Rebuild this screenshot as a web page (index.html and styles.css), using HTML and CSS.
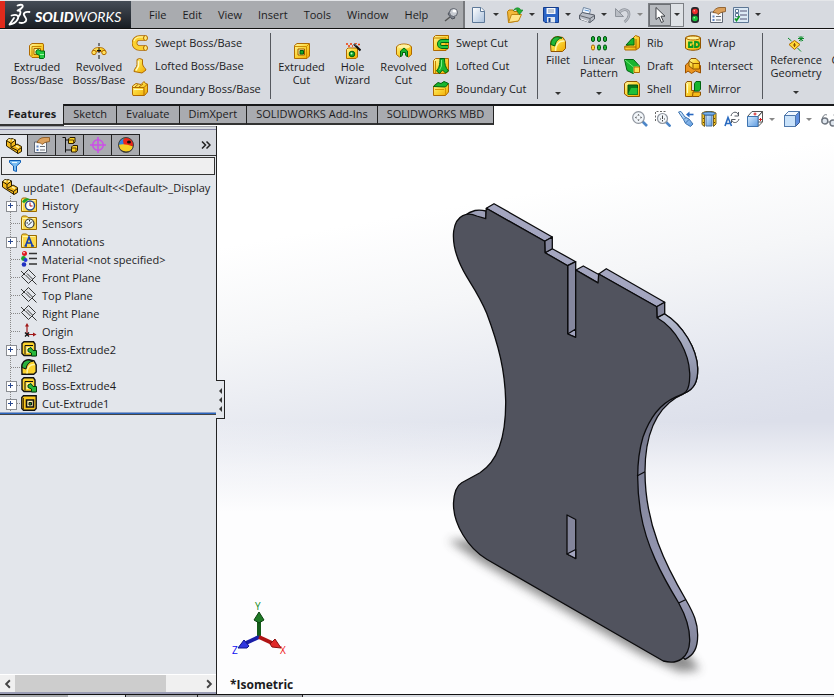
FILE: index.html
```html
<!DOCTYPE html>
<html lang="en">
<head>
<meta charset="utf-8">
<title>SOLIDWORKS - update1</title>
<link rel="stylesheet" href="styles.css">
</head>
<body>
<svg class="defs" aria-hidden="true">
  <defs>
    <linearGradient id="gold" x1="0" y1="0" x2="1" y2="1"><stop offset="0" stop-color="#fff6a0"/><stop offset=".45" stop-color="#fbd83a"/><stop offset="1" stop-color="#f0a800"/></linearGradient>
    <linearGradient id="steel" x1="0" y1="0" x2="1" y2="1"><stop offset="0" stop-color="#fff"/><stop offset="1" stop-color="#a9c0dc"/></linearGradient>
    <linearGradient id="blue" x1="0" y1="0" x2="1" y2="1"><stop offset="0" stop-color="#d6ecff"/><stop offset="1" stop-color="#5e9be0"/></linearGradient>
  </defs>
  <symbol id="i-boss" viewBox="0 0 16 16"><path d="M.5 2.500 3 .5h11l.5 1.500V12l-2.500 2.500H3L.5 12z" fill="url(#gold)" stroke="#b06a00"/><path d="M3 3.500h9.500M3 3.500v9.500" stroke="#c88400" fill="none"/><path d="M5 5.500h6.500v6H5z" fill="#fff3a0" stroke="#a86400"/><path d="M7 8l2-1.500 3 1.500h3.500v6.500L14.500 15.500H10.500v-3L7 10.500z" fill="#22c840" stroke="#006b12"/><path d="M11 11.500h4" stroke="#9cf5a0"/></symbol>
  <symbol id="i-revolve" viewBox="0 0 16 16"><path d="M1.500 9C1.500 6 4 4.500 8 4.500S14.500 6 14.500 9l-3 .5c-1-1.500-6-1.500-7 0z" fill="url(#gold)" stroke="#b06a00"/><circle cx="3" cy="9.500" r="2.200" fill="#ffe05a" stroke="#b06a00"/><circle cx="13" cy="9.500" r="2.200" fill="#ffe05a" stroke="#b06a00"/><path d="M8 0v3M8 5v5M8 12v4M6 7.500h4" stroke="#111"/></symbol>
  <symbol id="i-sweep" viewBox="0 0 16 16"><path d="M13 3H7.500a5 5 0 0 0 0 10H13" fill="none" stroke="#b06a00" stroke-width="5.600"/><path d="M13 3H7.500a5 5 0 0 0 0 10H13" fill="none" stroke="#fbd030" stroke-width="4"/><path d="M12 2H7.500a6 6 0 0 0-5.500 4" fill="none" stroke="#fff8a8" stroke-width="1.200"/><ellipse cx="13.500" cy="3" rx="2" ry="2.500" fill="#ffe870" stroke="#b06a00"/><ellipse cx="13.500" cy="13" rx="2" ry="2.500" fill="#ffe870" stroke="#b06a00"/></symbol>
  <symbol id="i-loft" viewBox="0 0 16 16"><path d="M5 1.500 7.500.5l3 1V6c.5 3 3 4 3.500 6l-4 3-8-1.500c0-3 3-4 3-7z" fill="url(#gold)" stroke="#b06a00"/><path d="M6.500 3v5L4 12.500" stroke="#fffbc8" fill="none" stroke-width="1.500"/></symbol>
  <symbol id="i-boundary" viewBox="0 0 16 16"><path d="M.5 5 4 2.500l5 1L12 .5l1.500 2 2 .5v8l-3 3.500H1L.5 13z" fill="url(#gold)" stroke="#b06a00"/><path d="M.5 6.500h11.500V14M12 6.500 15.500 3M3 6l3-2.500M7 6l4-3" fill="none" stroke="#b06a00"/><path d="M2 8.500h9" stroke="#fffbc0"/></symbol>
  <symbol id="i-cut" viewBox="0 0 16 16"><path d="M.5 2.500 3 .5h12.500V13L13 15.500H.5z" fill="url(#gold)" stroke="#b06a00"/><path d="M.5 3.500h12V15M12.500 3.500 15 1" fill="none" stroke="#d08c00"/><path d="M4 6h6.500v6H4z" fill="#fff2a0" stroke="#a05c00"/><path d="M6 7.500h3.500v3.500H6z" fill="#15a52a" stroke="#005b10"/></symbol>
  <symbol id="i-hole" viewBox="0 0 16 16"><path d="M1.500 6.500 3 5h9.500v9L11 15.500H1.500z" fill="url(#gold)" stroke="#b06a00"/><circle cx="7" cy="11" r="2.800" fill="#11a52a" stroke="#005b10"/><circle cx="6.500" cy="10.500" r="1" fill="#c8ffc8"/><path d="m9 1 6.500 6.500" stroke="#111" stroke-width="2.200"/><path d="M1 1h2M5 1h2M3 3h2M7 3h1M10 0h2M13 1.500h2" stroke="#f03800" stroke-width="1.600"/><path d="m10 1.500 1 1" stroke="#fff"/></symbol>
  <symbol id="i-revcut" viewBox="0 0 16 16"><path d="M.5 4C2 0 14 0 15.500 4v7.500L12.500 14l-2-1-1-4h-3l-1 4-2 1-3-2.500z" fill="url(#gold)" stroke="#b06a00"/><ellipse cx="8" cy="3.500" rx="6" ry="2" fill="#fff2a0"/><path d="M4.500 14V8L8 5l3.500 3v6L9.500 12V9.500h-3V12z" fill="#18b52e" stroke="#006410"/></symbol>
  <symbol id="i-sweptcut" viewBox="0 0 16 16"><path d="M.5 2.500 2.500.5h13V13L13 15.500H.5z" fill="url(#gold)" stroke="#b06a00"/><path d="M.5 3h12.500v12" fill="none" stroke="#c88400"/><path d="M16 6H9a3 3 0 0 0 0 6h6" fill="none" stroke="#006410" stroke-width="4"/><path d="M16 6H9a3 3 0 0 0 0 6h6" fill="none" stroke="#25c83c" stroke-width="2.200"/></symbol>
  <symbol id="i-loftcut" viewBox="0 0 16 16"><path d="M.5 2.500 2.500.5h13V13L13 15.500H.5z" fill="url(#gold)" stroke="#b06a00"/><path d="M2.500 3v12" stroke="#c88400"/><path d="M7 .5h4.500c0 6 1 9 4 12.500l-3 2-3-3-3 3.500L3.500 13C6 10 7 7 7 .5z" fill="#18b52e" stroke="#006410"/><path d="M8.500 2v6l-2 4" stroke="#78ef80" fill="none"/></symbol>
  <symbol id="i-boundcut" viewBox="0 0 16 16"><path d="M.5 5 3 3h12.500v8l-3 3.500H.5z" fill="url(#gold)" stroke="#b06a00"/><path d="M.5 5.500 5 1.500l3 1 3-2 4.500 2-3 3.500z" fill="#18b52e" stroke="#006410"/><path d="M12.500 7v7M2 8.500h9" stroke="#d69400"/></symbol>
  <symbol id="i-fillet" viewBox="0 0 16 16"><path d="M.5 8C.5 3 4 .5 8 .5l5 1 2.500 4v7L12.500 15.500H1z" fill="url(#gold)" stroke="#905400"/><path d="M.8 8.500C1 3.500 4 .8 8 .8l4 1.200c-4 .5-6.500 3.500-7 8z" fill="#22b838" stroke="#006410"/><path d="M5.500 15C5.500 8 9 4.500 14.500 5" fill="none" stroke="#fff8b0" stroke-width="1.500"/></symbol>
  <symbol id="i-pattern" viewBox="0 0 16 16"><g fill="#20b838" stroke="#005010"><rect x=".5" y=".5" width="3" height="5" rx="1.500"/><rect x="6.500" y=".5" width="3" height="5" rx="1.500"/><rect x="12.500" y=".5" width="3" height="5" rx="1.500"/><rect x="6.500" y="9" width="3" height="5" rx="1.500"/><rect x="12.500" y="9" width="3" height="5" rx="1.500"/></g><rect x=".5" y="9" width="3" height="5" rx="1.500" fill="#ffd640" stroke="#a86400"/></symbol>
  <symbol id="i-rib" viewBox="0 0 16 16"><path d="M8 4 11.500.5l4 1.500v10.500L12 15H1l-.5-3.500L8 9z" fill="url(#gold)" stroke="#b06a00"/><path d="M12 4v10.500M1 12h11" stroke="#a86400"/><path d="m2 10 6-6.500h2V10z" fill="#18b52e" stroke="#006410"/></symbol>
  <symbol id="i-draft" viewBox="0 0 16 16"><path d="M.5 1.500h9L15.500 8v3L9 15.500 3 12.500z" fill="#18b52e" stroke="#006410"/><path d="m1 2 8.500 7 6-1M9.500 9v6" stroke="#70e878" fill="none"/><path d="M10 9h5.500v5.500H10z" fill="#ffe256" stroke="#b06a00"/></symbol>
  <symbol id="i-shell" viewBox="0 0 16 16"><path d="M.5 2.500 3 .5h10l2.500 2.500v12.500H4L.5 13z" fill="url(#gold)" stroke="#905400"/><path d="M4 4h9.500v9.500H4z" fill="#087818" stroke="#005010"/><path d="M7 7h6.500v6.500H4z" fill="#20c038"/></symbol>
  <symbol id="i-wrap" viewBox="0 0 16 16"><path d="M.5 3C1 0 15 0 15.500 3v10c-1 3-14 3-15 0z" fill="url(#gold)" stroke="#905400"/><ellipse cx="8" cy="3" rx="7" ry="2" fill="#fff3a0" stroke="#b06a00"/><path d="M7.500 7.500H4v4.500h3.500V9.500M10 7v5h1.500a2.500 2.500 0 0 0 0-5z" fill="none" stroke="#0b9a22" stroke-width="1.800"/></symbol>
  <symbol id="i-intersect" viewBox="0 0 16 16"><path d="M.5 7 4 4l4 1 7.500 2.500V15l-5-2-4 2.500L3 13l-2.500 2z" fill="#eb9520" stroke="#9a5000"/><path d="m4 3 2-2.500h5L14.500 4v7H8L4 8z" fill="url(#gold)" stroke="#905400"/><path d="M8 5.500h6M8 5.500v5M4 3l4 2.500" stroke="#905400"/></symbol>
  <symbol id="i-mirror" viewBox="0 0 16 16"><path d="M.5 2.500 2 .5h4.500v9H9V14l-1.500 1.500H.5z" fill="url(#gold)" stroke="#905400"/><path d="M8 11h7.500v3L14 15.500H7.500z" fill="#f6ba18" stroke="#905400"/><path d="M9.500 2.500 11 .5h4.500v8L13.500 10h-4z" fill="#18b52e" stroke="#006410"/><path d="M2.500 3v9" stroke="#fffbc0"/></symbol>
  <symbol id="i-refgeo" viewBox="0 0 16 16"><path d="m1 8.500 5.500-4L12 8.500l-5.500 5z" fill="#ffd936" stroke="#b06a00"/><path d="M6.500 7v4M5 9h3" stroke="#8a5000"/><path d="m0 2 3.500 3M9.500 12l3.500 3.500M10 2.500h6M13 0v5.500M11 .5l4 4.500M15 .5l-4 4.500" stroke="#0a8a28" fill="none"/></symbol>
  <symbol id="i-pin" viewBox="0 0 16 16"><path d="m1 14 5-4" stroke="#555" stroke-width="1.500"/><path d="m4 7 4 5 3-1-5-7z" fill="#808590" stroke="#4e535c"/><circle cx="9.500" cy="5.500" r="4" fill="#c7cbd2" stroke="#5b606a"/><ellipse cx="10.500" cy="4" rx="2" ry="1.500" fill="#fff"/></symbol>
  <symbol id="i-new" viewBox="0 0 16 16"><path d="M1.500.5H10L13.500 4v11.500h-12z" fill="url(#steel)" stroke="#5d7898"/><path d="M9.500.5v4h4" fill="#fff" stroke="#5d7898"/></symbol>
  <symbol id="i-open" viewBox="0 0 16 16"><path d="M.5 4.500 2 3h4l1 1.500h4V14L1.500 15.500z" fill="#f2b93a" stroke="#b47808"/><path d="m1.500 15.500 3-8h10l-3 6.500z" fill="#ffe58a" stroke="#c08410"/><path d="M6.500 3.500C8 0 13 0 13.500 3H16l-3.500 4.500L9.500 3h1.800C10 1.800 8 2 6.500 3.500z" fill="#25b437" stroke="#0b7c1e" stroke-width=".6"/></symbol>
  <symbol id="i-save" viewBox="0 0 16 16"><path d="M.5.5h15v15H2L.5 14z" fill="#2c66c8" stroke="#143c8c"/><path d="M3.500 1h9v6h-9z" fill="#f7f9fc"/><path d="M5 3h6M5 5h6" stroke="#8899b0"/><path d="M4 10h8v5.500H4z" fill="#dfe6ef"/><path d="M5.500 11h2v4h-2z" fill="#16408f"/></symbol>
  <symbol id="i-print" viewBox="0 0 16 16"><path d="M3 6 4.500.5l7 2L10.500 7z" fill="#f2f8ff" stroke="#6d84a0"/><path d="m.5 8 3-2.500L15.500 8v4L11 15.500.5 12z" fill="#b9bec7" stroke="#555b66"/><path d="m.5 8.500 10.500 3 4.500-3M11 11.500v4" stroke="#62676f" fill="none"/><path d="m2 12 7 2.500" stroke="#fff"/><path d="M5.500 3 10 4" stroke="#5b9be0"/></symbol>
  <symbol id="i-undo" viewBox="0 0 16 16"><path d="M3.500 6.500C8 .5 14.500 2 14 8c-.2 3-2 5-4.500 7" fill="none" stroke="#8f949c" stroke-width="2.600"/><path d="M3.500 6.500C8 .5 14.500 2 14 8c-.2 3-2 5-4.500 7" fill="none" stroke="#b9bdc4" stroke-width="1.200"/><path d="M.5 1.500v8h8z" fill="#b9bdc4" stroke="#8f949c"/></symbol>
  <symbol id="i-arrow" viewBox="0 0 16 16"><path d="M4 .5v12l3-2.500 2.500 5.500 2-1L9 9.200h4z" fill="#fff" stroke="#3c3f44"/></symbol>
  <symbol id="i-light" viewBox="0 0 16 16"><rect x="4" y="0" width="8" height="16" rx="3" fill="#26282b"/><circle cx="8" cy="4.500" r="2.800" fill="#ef2b2b"/><circle cx="8" cy="11.500" r="2.800" fill="#17c23c"/><circle cx="7.300" cy="3.800" r=".8" fill="#ffb0a8"/><circle cx="7.300" cy="10.800" r=".8" fill="#b2ffb8"/></symbol>
  <symbol id="i-props" viewBox="0 0 16 16"><path d="M.5 5h12v10.500H.5z" fill="#f7f8fa" stroke="#5f6672"/><path d="M2.500 8.500h2v2h-2zM2.500 12h2v2h-2z" fill="#5f83c0"/><path d="M6 9.500h5M6 13h5" stroke="#6a7078"/><path d="M3 5.500C4 2.500 7 .5 10 .5h5.500v4L11 5.500 8 7.500 6.500 6z" fill="#dba05c" stroke="#83501c" stroke-width=".8"/></symbol>
  <symbol id="i-options" viewBox="0 0 16 16"><path d="M.5.5h15v15H.5z" fill="#dce9f5" stroke="#5d7795"/><path d="M7 4h7M7 8h7M7 12h7" stroke="#557"/><path d="M2.500 2.500h3v3h-3zM2.500 6.500h3v3h-3z" fill="#fff" stroke="#5d7795"/><path d="m2 11.500 1.500 2L6.500 9" fill="none" stroke="#109a24" stroke-width="1.800"/></symbol>
  <symbol id="i-zoomfit" viewBox="0 0 16 16"><path d="m10.500 10.500 4.500 4.500" stroke="#4d86c8" stroke-width="2.600"/><circle cx="6.500" cy="6.500" r="5.800" fill="#f2f6fa" stroke="#8f959e" stroke-width="1.200"/><path d="M6.500 3 7.700 4.500H5.300zM6.500 10 7.700 8.500H5.300zM3 6.500 4.500 5.300v2.400zM10 6.500 8.500 5.300v2.400z" fill="#444"/></symbol>
  <symbol id="i-zoomarea" viewBox="0 0 16 16"><path d="m11 11 4.500 4.500" stroke="#4d86c8" stroke-width="2.600"/><path d="M.5 10V.5h10" fill="none" stroke="#666" stroke-dasharray="2 1.500"/><circle cx="7.500" cy="7.500" r="5" fill="#f2f6fa" stroke="#8f959e" stroke-width="1.200"/><path d="M7.500 4.500v3.500M7.500 9v1.500M5 8h1M9 8h1" stroke="#444"/></symbol>
  <symbol id="i-prev" viewBox="0 0 16 16"><path d="M.5 1 3 .5 7 6l4 2 4 5-2.500 2.500-5-3-2-4z" fill="url(#blue)" stroke="#3e74b0"/><path d="m6 8.500 2-2M7.500 12l3.500-3.500" stroke="#3e74b0"/><path d="M15.500 3.500h-5" stroke="#2868c0" stroke-width="1.600"/><path d="M11.500.5 8 3.500l3.500 3z" fill="#2868c0"/></symbol>
  <symbol id="i-section" viewBox="0 0 16 16"><path d="M1 2 4.500.5h7L15 2v11l-2.500 2.500V4h-9v11.500L1 13.500z" fill="#f6c628" stroke="#77601a"/><path d="M5 4h6v11H5z" fill="url(#blue)" stroke="#46709f"/><path d="M1.500 2.500C4 .5 12 .5 14.500 2.500L12 4H4z" fill="#77b2ef" stroke="#3c6ba0"/><path d="M2 7l1 1M2 11l1 1M13 7l1 1M13 11l1 1" stroke="#654a00"/></symbol>
  <symbol id="i-annot" viewBox="0 0 16 16"><path d="m1 15 3-8.500L7.500 15M2 12.500h4.500" fill="none" stroke="#2a6bc0" stroke-width="1.600"/><path d="M7 5c1-5 7-5 7.500-.5M15 8c-1 4-6 5-7.500 1M14.500 1v4h-4M7.500 12V8.500h4" fill="none" stroke="#555b64"/></symbol>
  <symbol id="i-orient" viewBox="0 0 16 16"><path d="M5 .5h10.500V11L11 15.500" fill="#fff" stroke="#555"/><path d="M.5 5.500 5 .5h10.500L11 5.500zM11 5.500v10M11 5.500 15.500.5M11 11h4" fill="#fafcff" stroke="#555"/><path d="M.5 5.500H11v10H.5z" fill="url(#blue)" stroke="#3e74b0"/><path d="M8 1.500v3M6.500 3h3M13.500 7v3M12 8.500h3" stroke="#d42020"/></symbol>
  <symbol id="i-cube" viewBox="0 0 16 16"><path d="m.5 4.500 4-4h11v11l-4 4H.5z" fill="#5f8fe0" stroke="#38588c"/><path d="M.5 4.500h11v11H.5z" fill="#c9e2fa" stroke="#4f78ac"/><path d="m.5 4.500 4-4h11l-4 4z" fill="#f0f7ff" stroke="#4f78ac"/></symbol>
  <symbol id="i-glasses" viewBox="0 0 16 16"><circle cx="3.800" cy="10" r="3" fill="#dfe6ee" stroke="#6d747e" stroke-width="1.400"/><circle cx="12" cy="12" r="3" fill="#dfe6ee" stroke="#6d747e" stroke-width="1.400"/><path d="M1 9C2 4 4 3 6 4M7 11h2M14.500 10c0-3 0-5-2-6" fill="none" stroke="#6d747e"/></symbol>
  <symbol id="i-part" viewBox="0 0 16 16"><path d="M.5 2.500 3 .5l2 .5 1-.5L9.500 2v5l1.500-1 4.500 2.500v5L12 15.500.5 8z" fill="#f2b91c" stroke="#2a1c00"/><path d="M.5 2.500 5 5.500 9.500 2M5 5.500V9.500l6.500 3 4-3M11.500 12.500v3M5 9.500 9.500 7" fill="none" stroke="#2a1c00"/><path d="m2 2.500 2.500-1M6 2.500l2-.500M10 8l3 1.500" stroke="#fff3a0" stroke-width="1.500"/></symbol>
  <symbol id="i-config" viewBox="0 0 16 16"><path d="M.5.5h3v15M3.500 3h3M3.500 13h6" fill="none" stroke="#111"/><path d="m6.500 2 1.500-1.500h5V5L11.500 6.500h-5zM9.500 10 11 8.500h4.500v5L14 15H9.500z" fill="#fbd226" stroke="#2a1c00"/><path d="M6.500 3h5v3.500M9.500 11h4.500v4" fill="none" stroke="#604000"/></symbol>
  <symbol id="i-target" viewBox="0 0 16 16"><circle cx="8" cy="8" r="5.300" fill="none" stroke="#cc4fe8" stroke-width="1.500"/><path d="M8 0v16M0 8h16" stroke="#cc4fe8" stroke-width="1.500"/></symbol>
  <symbol id="i-ball" viewBox="0 0 16 16"><circle cx="8" cy="8" r="7.500" fill="#222"/><path d="M8 8V.5A7.500 7.500 0 0 0 .7 8z" fill="#2fae3c"/><path d="M5 1c-3 2-4 4-4.300 7H8z" fill="#3584e0"/><path d="M8 .5C4 2 5 5 6 8l9.500 1A7.500 7.500 0 0 0 8 .5z" fill="#ee2418"/><path d="M.7 8c3-1.500 8-1 14.500 1.500A7.500 7.500 0 0 1 .7 8z" fill="#f7cf24"/><ellipse cx="11" cy="5" rx="2" ry="1.500" fill="#111"/><circle cx="8" cy="8" r="7.500" fill="none" stroke="#444"/></symbol>
  <symbol id="i-funnel" viewBox="0 0 16 16"><path d="M2.500 2.500h11v2L9.500 8v5.500l-3-1V8l-4-3.500z" fill="#79bdf2" stroke="#0c5cb4"/><path d="M5 4.500h5" stroke="#e6f5ff"/></symbol>
  <symbol id="i-folder" viewBox="0 0 16 16"><path d="M.5 2.500 1.500 1h4L7 2.500h8.500v12H.5z" fill="#fbd84c" stroke="#9a6a00"/><path d="M1.500 4.500v9M1.500 3.500H14" stroke="#fff4a8"/></symbol>
  <symbol id="i-history" viewBox="0 0 16 16"><use href="#i-folder"/><circle cx="9" cy="8.500" r="4.500" fill="#fff" stroke="#234a90" stroke-width="1.400"/><path d="M9 5.500v3.500h2.500" fill="none" stroke="#b01010"/><path d="M1 5C3 1 6 .5 9 2L6.500 3.500 3 6z" fill="#18a52c"/></symbol>
  <symbol id="i-sensor" viewBox="0 0 16 16"><use href="#i-folder"/><circle cx="8.500" cy="8.500" r="4.500" fill="#e9f3fb" stroke="#333" stroke-width="1.200"/><path d="m7 10.500 4-4M5.500 8h1.500M8.500 5v1.500" stroke="#222"/></symbol>
  <symbol id="i-notes" viewBox="0 0 16 16"><use href="#i-folder"/><path d="m4.500 13 3.500-9 3.500 9M5.500 10h5M3.500 13h2.500M10 13h3" fill="none" stroke="#1440b0" stroke-width="1.700"/></symbol>
  <symbol id="i-material" viewBox="0 0 16 16"><path d="M8 2.500h8M8 7.500h8M8 13h8" stroke="#333" stroke-width="1.500"/><circle cx="3.500" cy="2.500" r="2.500" fill="#e01820"/><circle cx="2.500" cy="7.500" r="2.400" fill="#18a42c"/><circle cx="4.500" cy="9" r="2" fill="#2838d8"/><circle cx="3" cy="13.500" r="2.300" fill="#2030c0"/><circle cx="3" cy="1.800" r=".8" fill="#fff"/></symbol>
  <symbol id="i-plane" viewBox="0 0 16 16"><path d="M.5 7.500 7.500.5l7 7-7 7zM0 2l4 4M11 11l4.500 4.500M6 4.500l5.500 5.500M4.500 6l5 5" fill="none" stroke="#222" stroke-width=".9"/></symbol>
  <symbol id="i-origin" viewBox="0 0 16 16"><path d="M6 11V2M6 11.500h8" fill="none" stroke="#a01818" stroke-width="1.200"/><path d="m6 0 2 3.500H4zM15.500 11.500 12 9.500v4z" fill="#a01818"/><path d="m4 9.500 4 4M8 9.500l-4 4" stroke="#111" stroke-width="1.300"/></symbol>
  <symbol id="i-tboss" viewBox="0 0 16 16"><path d="M1 2.500 3 .8h9.500L14 3v11.500H3L1 12.500z" fill="#fbd22c" stroke="#111" stroke-width="1.400"/><path d="M4 4.500h8M4 4.500v9" stroke="#111" fill="none"/><path d="M5.500 6h6v6h-6z" fill="#fff6b0"/><path d="m7 8 3-1.500 2 3h3.500V15h-5v-3L7 10.500z" fill="#28b83c" stroke="#003a08"/></symbol>
  <symbol id="i-tfillet" viewBox="0 0 16 16"><path d="M.8 8C.8 3 4 .8 8 .8l5 1L15.200 6v7l-2.500 2.200H1z" fill="#fbd22c" stroke="#111" stroke-width="1.400"/><path d="M1 8.500C1 3.500 4 1 8 1l4 1C8 3 5.500 5.500 5 10z" fill="#2ab03c" stroke="#111"/><path d="M6 14.500C6 8 9 5 14 5.500" fill="none" stroke="#fff3a0" stroke-width="1.500"/></symbol>
  <symbol id="i-tcut" viewBox="0 0 16 16"><path d="M.8 2.500 2.500.8h12.700v12.700l-1.700 1.700H2.500L.8 13.500z" fill="#fbc81c" stroke="#111" stroke-width="1.400"/><path d="M2.500 3v11" stroke="#604000"/><path d="M5.500 5h7v7h-7z" fill="#fff6b0" stroke="#111" stroke-width="1.600"/><path d="M8 7.500h2.500V10H8z" fill="#18a42c" stroke="#111"/></symbol>
</svg>

<div class="app">
  <header class="titlebar">
    <div class="brand">
      <svg class="brand-mark" viewBox="0 0 24 24" aria-hidden="true"><g fill="none" stroke="#fff" stroke-width="1.800" stroke-linecap="round" stroke-linejoin="round"><path d="M9.500 2.500c4-1.500 6-.5 5 1.500-.7 1.500-3 2.700-5 3.500M10 7.500c3.500 0 3 3.500.5 6"/><path d="M3.500 12.500c6-1.500 8 .5 6 4-1.700 3-4.500 4.500-8 5l4.500-6.500"/><path d="M21.500 9c-4.500-.5-7 1-5 4s3 5-.5 6.500c-1.500.6-3.500.5-4.500.2"/></g></svg>
      <span class="brand-name"><b>SOLID</b>WORKS</span>
    </div>
    <nav class="menubar" aria-label="Main menu">
      <button>File</button><button>Edit</button><button>View</button><button>Insert</button><button>Tools</button><button>Window</button><button>Help</button>
      <button class="pin" aria-label="Pin menu"><svg class="icon"><use href="#i-pin"/></svg></button>
    </nav>
    <div class="quick" role="toolbar" aria-label="Standard">
      <button class="split" aria-label="New"><svg class="icon"><use href="#i-new"/></svg><i class="caret"></i></button>
      <button class="split" aria-label="Open"><svg class="icon"><use href="#i-open"/></svg><i class="caret"></i></button>
      <button class="split" aria-label="Save"><svg class="icon"><use href="#i-save"/></svg><i class="caret"></i></button>
      <button class="split" aria-label="Print"><svg class="icon"><use href="#i-print"/></svg><i class="caret"></i></button>
      <button class="split dim" aria-label="Undo"><svg class="icon"><use href="#i-undo"/></svg><i class="caret"></i></button>
      <button class="select" aria-label="Select"><span class="select-face"><svg class="icon"><use href="#i-arrow"/></svg></span><i class="caret"></i></button>
      <button aria-label="Rebuild"><svg class="icon"><use href="#i-light"/></svg></button>
      <button aria-label="File properties"><svg class="icon"><use href="#i-props"/></svg></button>
      <button class="split" aria-label="Options"><svg class="icon"><use href="#i-options"/></svg><i class="caret"></i></button>
    </div>
  </header>

  <section class="ribbon" aria-label="Features tools">
    <div class="group boss">
      <button class="big"><svg class="icon"><use href="#i-boss"/></svg><span>Extruded</span><span>Boss/Base</span></button>
      <button class="big"><svg class="icon"><use href="#i-revolve"/></svg><span>Revolved</span><span>Boss/Base</span></button>
      <div class="stack">
        <button><svg class="icon"><use href="#i-sweep"/></svg>Swept Boss/Base</button>
        <button><svg class="icon"><use href="#i-loft"/></svg>Lofted Boss/Base</button>
        <button><svg class="icon"><use href="#i-boundary"/></svg>Boundary Boss/Base</button>
      </div>
    </div>
    <div class="group cuts">
      <button class="big"><svg class="icon"><use href="#i-cut"/></svg><span>Extruded</span><span>Cut</span></button>
      <button class="big"><svg class="icon"><use href="#i-hole"/></svg><span>Hole</span><span>Wizard</span></button>
      <button class="big"><svg class="icon"><use href="#i-revcut"/></svg><span>Revolved</span><span>Cut</span></button>
      <div class="stack">
        <button><svg class="icon"><use href="#i-sweptcut"/></svg>Swept Cut</button>
        <button><svg class="icon"><use href="#i-loftcut"/></svg>Lofted Cut</button>
        <button><svg class="icon"><use href="#i-boundcut"/></svg>Boundary Cut</button>
      </div>
    </div>
    <div class="group shape">
      <button class="big drop"><svg class="icon"><use href="#i-fillet"/></svg><span>Fillet</span><i class="caret"></i></button>
      <button class="big drop"><svg class="icon"><use href="#i-pattern"/></svg><span>Linear</span><span>Pattern</span><i class="caret"></i></button>
      <div class="stack">
        <button><svg class="icon"><use href="#i-rib"/></svg>Rib</button>
        <button><svg class="icon"><use href="#i-draft"/></svg>Draft</button>
        <button><svg class="icon"><use href="#i-shell"/></svg>Shell</button>
      </div>
      <div class="stack">
        <button><svg class="icon"><use href="#i-wrap"/></svg>Wrap</button>
        <button><svg class="icon"><use href="#i-intersect"/></svg>Intersect</button>
        <button><svg class="icon"><use href="#i-mirror"/></svg>Mirror</button>
      </div>
    </div>
    <div class="group refs">
      <button class="big drop"><svg class="icon"><use href="#i-refgeo"/></svg><span>Reference</span><span>Geometry</span><i class="caret"></i></button>
      <button class="big drop"><svg class="icon"></svg><span>Curves</span><i class="caret"></i></button>
    </div>
  </section>

  <nav class="tabs" aria-label="Command tabs">
    <button class="active">Features</button><button>Sketch</button><button>Evaluate</button><button>DimXpert</button><button>SOLIDWORKS Add-Ins</button><button>SOLIDWORKS MBD</button>
  </nav>

  <main class="work">
    <aside class="panel">
      <div class="panel-tabs">
        <button class="active" aria-label="Feature tree"><svg class="icon"><use href="#i-part"/></svg></button>
        <button aria-label="Properties"><svg class="icon"><use href="#i-props"/></svg></button>
        <button aria-label="Configurations"><svg class="icon"><use href="#i-config"/></svg></button>
        <button aria-label="DimXpert manager"><svg class="icon"><use href="#i-target"/></svg></button>
        <button aria-label="Display manager"><svg class="icon"><use href="#i-ball"/></svg></button>
        <button class="more" aria-label="More tabs"><svg viewBox="0 0 10 8"><path d="m1 .5 3.500 3.500L1 7.500M5.500.5 9 4 5.500 7.500"/></svg></button>
      </div>
      <label class="filter"><svg class="icon"><use href="#i-funnel"/></svg><input type="text" aria-label="Filter tree"></label>
      <div class="tree-root"><svg class="icon"><use href="#i-part"/></svg><span>update1&nbsp; (Default&lt;&lt;Default&gt;_Display</span></div>
      <ul class="tree">
        <li class="parent"><svg class="icon"><use href="#i-history"/></svg>History</li>
        <li><svg class="icon"><use href="#i-sensor"/></svg>Sensors</li>
        <li class="parent"><svg class="icon"><use href="#i-notes"/></svg>Annotations</li>
        <li><svg class="icon"><use href="#i-material"/></svg>Material &lt;not specified&gt;</li>
        <li><svg class="icon"><use href="#i-plane"/></svg>Front Plane</li>
        <li><svg class="icon"><use href="#i-plane"/></svg>Top Plane</li>
        <li><svg class="icon"><use href="#i-plane"/></svg>Right Plane</li>
        <li><svg class="icon"><use href="#i-origin"/></svg>Origin</li>
        <li class="parent"><svg class="icon"><use href="#i-tboss"/></svg>Boss-Extrude2</li>
        <li><svg class="icon"><use href="#i-tfillet"/></svg>Fillet2</li>
        <li class="parent"><svg class="icon"><use href="#i-tboss"/></svg>Boss-Extrude4</li>
        <li class="parent"><svg class="icon"><use href="#i-tcut"/></svg>Cut-Extrude1</li>
      </ul>
      <div class="rollback"></div>
      <div class="scroll">
        <button aria-label="Scroll left"><svg viewBox="0 0 8 8"><path d="M5.500 1 2.500 4l3 3"/></svg></button>
        <div class="track"><div class="thumb"></div></div>
        <button aria-label="Scroll right"><svg viewBox="0 0 8 8"><path d="M2.500 1l3 3-3 3"/></svg></button>
      </div>
    </aside>

    <section class="viewport" aria-label="Graphics area">
      <svg class="model" viewBox="217 126 617 568" preserveAspectRatio="xMidYMid meet" role="img" aria-label="Extruded plate, isometric view">
        <defs>
          <filter id="soft" x="-20%" y="-20%" width="140%" height="140%"><feGaussianBlur stdDeviation="5"/></filter>
          <linearGradient id="edge" x1="0" y1="313" x2="0" y2="405" gradientUnits="userSpaceOnUse"><stop offset="0" stop-color="#b4bace"/><stop offset=".5" stop-color="#9a9fb6"/><stop offset="1" stop-color="#6e7186"/></linearGradient>
          <linearGradient id="edge2" x1="0" y1="400" x2="0" y2="660" gradientUnits="userSpaceOnUse"><stop offset="0" stop-color="#6c6e80"/><stop offset=".35" stop-color="#8588a0"/><stop offset=".75" stop-color="#9a9cb6"/><stop offset="1" stop-color="#7b7e92"/></linearGradient>
        </defs>
        <path d="M448 540 480 540 690 656 700 670 680 672 640 654 480 562z" fill="#444" opacity=".6" filter="url(#soft)"/>
        <g stroke="#0b0b0d" stroke-width="1.300" stroke-linejoin="round">
          <path d="M464 216C472 210 478 209 486 211v9z" fill="#9da0b8"/>
          <path d="M664.300 313.700C683 325 697 349 697.700 368.300C698 382 694 389 685 393L676.700 397.300C661 407 645 427 645 471.700C645 525 666 566 686 600C694 614 697.700 623 697.700 635C697.700 648 694 655 685 659.300L664 640 630 470 650 400 670 370 657 317.700z" fill="url(#edge2)"/>
          <path d="M664.300 313.700C683 325 697 349 697.700 368.300C698 382 694 389 685 393L670 380 657 317.700z" fill="url(#edge)"/>
          <path d="M486.300 208.300 494 203.700 552.300 237 544.700 241.300zM545 252.700 552.300 248.700 575.700 261.700 567.700 265.700zM576 270 583.300 266 598.700 274.500V283zM598.700 274 606.300 268.700 664.700 302.300 656.700 306.700z" fill="#a4a6c0"/>
          <path d="M544.700 241.300 552.300 237V248.700L545 252.700zM656.700 306.700 664.700 302.300V313.700L657 317.700zM567.700 265.700 575.700 261.700V337.300L567.700 334z" fill="#85879e"/>
          <path d="M567.700 334 575.700 329V337.300z" fill="#a4a6c0"/>
          <path fill="#51535e" d="M485.700 218.700 486.300 208.300 544.700 241.300 545 252.700 567.700 265.700V334L575.700 337.300V270L598 283 598.700 274 656.700 306.700 657 317.700C677 329 689 354 689.700 373C690 382 689 388 686 391.700C683 395 679 395.500 675 397.300C660 404 650 417 643 437C637 457 636 483 640.700 513C646 545 661 574 678.700 603C687 618 690 629 689.700 641C689 658 678 665 663.300 661L486.700 559.300C468 548 453 524 453.500 503C454 493 456 486 461.700 482.700L480 472.700C497 462 506 438 505.700 401C505 371 499 346 486.700 313.300C480 297 473 287 466.700 276.700C458 262 452 246 453.700 231C456 214 468 212 476.700 216z"/>
          <path d="M637 476 645 471.700M678.700 603 686 599.500" fill="none"/>
          <path d="M567 515 575.700 519.500V558.500L567 554z" fill="#83859b"/><path d="M567 554 575.700 549.500V558.500z" fill="#a4a6c0"/>
        </g>
      </svg>
      <div class="hud" role="toolbar" aria-label="View">
        <button aria-label="Zoom to fit"><svg class="icon"><use href="#i-zoomfit"/></svg></button>
        <button aria-label="Zoom to area"><svg class="icon"><use href="#i-zoomarea"/></svg></button>
        <button aria-label="Previous view"><svg class="icon"><use href="#i-prev"/></svg></button>
        <button aria-label="Section view"><svg class="icon"><use href="#i-section"/></svg></button>
        <button aria-label="Annotation views"><svg class="icon"><use href="#i-annot"/></svg></button>
        <button class="split" aria-label="View orientation"><svg class="icon"><use href="#i-orient"/></svg><i class="caret"></i></button>
        <button class="split" aria-label="Display style"><svg class="icon"><use href="#i-cube"/></svg><i class="caret"></i></button>
        <button aria-label="Hide or show items"><svg class="icon"><use href="#i-glasses"/></svg></button>
      </div>
      <button class="grip" aria-label="Collapse panel"><i></i><i></i><i></i></button>
      <div class="corner">
        <svg class="triad" viewBox="0 0 58 58" role="img" aria-label="Axes">
          <path d="M29 36V17" stroke="#155c1a" stroke-width="4"/><path d="m29 11 5 8-5 3-5-3z" fill="#1f7a26" stroke="#0c4210"/>
          <path d="M29 36 16 42" stroke="#1a1fa8" stroke-width="4"/><path d="m8 47 6-8 5 6-2 2z" fill="#3038e0" stroke="#10148a"/>
          <path d="m29 36 13 6" stroke="#b01414" stroke-width="4"/><path d="m51 47-9-1-2-3 5-5z" fill="#e02a2a" stroke="#8a1010"/>
          <text x="25" y="9" fill="#118a1a">Y</text><text x="2" y="53" fill="#1010f0">Z</text><text x="50" y="53" fill="#f01414">X</text>
        </svg>
        <strong class="view-name">*Isometric</strong>
      </div>
    </section>
  </main>

  <footer class="sheets">
    <span class="nav-keys"></span><button class="active">Model</button><button>3D Views</button><button>Motion Study 1</button>
  </footer>
</div>
</body>
</html>
```
FILE: styles.css
```css
* { box-sizing: border-box; }
body { margin: 0; font: 12px/13px "Open Sans", "Noto Sans", sans-serif; color: #1c1c1e; }
button { font: inherit; color: inherit; background: none; border: 0; padding: 0; margin: 0; }
.defs { position: absolute; width: 0; height: 0; }
.icon { width: 16px; height: 16px; flex: none; display: block; }
.caret { width: 0; height: 0; border: 3px solid transparent; border-top-color: #333; border-bottom: 0; flex: none; }

.app { display: flex; flex-direction: column; height: 100vh; overflow: hidden; background: #d7dae0; }

/* title bar */
.titlebar { display: flex; flex: none; height: 29px; border-bottom: 1px solid #111; border-top: 1px solid #e4e6e9; }
.brand { display: flex; align-items: center; flex: none; width: 131px; border-left: 5px solid #e02a1c; background: linear-gradient(#454d57, #191d23); color: #fff; padding-left: 3px; }
.brand-mark { width: 24px; height: 24px; }
.brand-name { font: italic 14px/16px "Lato", sans-serif; margin-left: 3px; padding-top: 4px; }
.brand-name b { font-weight: 900; }
.menubar { display: flex; align-items: center; gap: 16px; flex: none; width: 334px; padding-left: 18px; background: #a9abaf; border-right: 2px solid #77797d; font-size: 11px; }
.quick { display: flex; align-items: center; flex: 1; padding-left: 6px; }
.quick button { margin-right: 7px; }
.quick .split, .hud .split { display: flex; align-items: center; gap: 6px; margin-right: 8px; }
.quick .dim .caret, .hud .caret { border-top-color: #888; }
.quick .dim { margin-right: 5px; }
.quick .select { display: flex; align-items: center; width: 36px; height: 24px; border: 1px solid #7c7f84; margin-right: 3px; background: #dfe2e6; }
.select-face { display: grid; place-items: center; width: 22px; height: 22px; margin-right: 3px; background: #b7babf; border: 1px solid #6c6f74; }

/* ribbon */
.ribbon { display: flex; flex: none; height: 77px; padding-top: 3px; border-bottom: 2px solid #17181a; font-size: 11px; overflow: hidden; border-top: 1px solid #f0eef4; }
.group { display: grid; flex: none; height: 66px; border-right: 1px solid #55585e; }
.boss { grid-template-columns: 62px 62px 1fr; width: 271px; padding-left: 6px; }
.cuts { grid-template-columns: 51px 51px 51px 1fr; width: 267px; padding-left: 5px; }
.shape { grid-template-columns: 40px 42px 61px 1fr; width: 225px; }
.refs { grid-template-columns: 66px 40px; border-right: 0; }
.big { display: flex; flex-direction: column; align-items: center; padding-top: 10px; white-space: nowrap; position: relative; }
.big .icon { margin-bottom: 1px; }
.big.drop { padding-top: 3px; }
.big.drop .caret { position: absolute; left: 50%; bottom: 5px; margin-left: -3px; }
.stack { display: grid; grid-template-rows: repeat(3, 23px); padding-left: 2px; margin-top: -2px; }
.cuts .stack, .shape .stack { padding-left: 4px; }
.stack button { display: flex; align-items: center; gap: 7px; white-space: nowrap; }

/* command tabs */
.tabs { display: flex; flex: none; height: 20px; background: #fff; align-items: flex-start; }
.tabs button { height: 19px; padding: 0 9px 2px; background: #a9abb0; border-right: 1px solid #222; border-bottom: 2px solid #333; font-size: 11px; white-space: nowrap; }
.tabs .active { height: 22px; margin-top: -2px; padding: 0 7px 2px 8px; background: #d7dae0; font-weight: 700; position: relative; }

/* work area */
.work { display: grid; grid-template-columns: 217px 1fr; flex: 1; min-height: 0; }
.panel { display: flex; flex-direction: column; min-width: 0; border-right: 1px solid #222; background: #e3e6eb; }
.panel-tabs { display: flex; align-items: flex-end; height: 30px; border-bottom: 1px solid #333; background: #d7dae0; border-top: 1px solid #a0a2a8; box-shadow: inset 0 2px #d7dae0, inset 0 3px #8688a6; flex: none; }
.panel-tabs button { display: grid; place-items: center; width: 28px; height: 21px; background: #a9abb0; border: 1px solid #222; border-left: 0; border-bottom: 0; }
.panel-tabs .active { background: #e3e6eb; height: 22px; margin-bottom: -1px; }
.panel-tabs .more { margin-left: auto; margin-right: 2px; width: 16px; background: none; border: 0; }
.more svg { width: 10px; height: 8px; fill: none; stroke: #222; stroke-width: 1.5; }
.filter { display: flex; align-items: center; flex: none; height: 18px; margin: 1px 1px 0; padding-left: 5px; border: 1px solid #333; background: #efeff0; }
.filter input { flex: 1; min-width: 0; border: 0; background: none; padding: 0; height: 14px; outline: 0; }
.tree-root { display: flex; align-items: center; gap: 5px; height: 18px; margin-top: 3px; padding-left: 2px; flex: none; white-space: nowrap; overflow: hidden; font-size: 11px; }
.tree { list-style: none; margin: 0; padding: 0; font-size: 11px; flex: none; background: linear-gradient(#888 50%, transparent 50%) 10px 0 / 1px 2px repeat-y; }
.tree li { display: flex; align-items: center; gap: 5px; height: 18px; padding-left: 21px; white-space: nowrap; position: relative; }
.tree li::before { content: ""; position: absolute; left: 11px; top: 9px; width: 10px; height: 1px; background: repeating-linear-gradient(90deg, #888 0 1px, transparent 1px 2px); }
.tree .parent::after { content: ""; position: absolute; left: 6px; top: 5px; width: 9px; height: 9px; border: 1px solid #8a8d92; background: linear-gradient(#2b4a90, #2b4a90) 1px 3px / 5px 1px no-repeat, linear-gradient(#2b4a90, #2b4a90) 3px 1px / 1px 5px no-repeat, #fff; }
.rollback { height: 3px; background: #2a66c0; border-top: 1px solid #8aa0c8; border-bottom: 1px solid #444; flex: none; }
.scroll { display: flex; height: 20px; margin-top: auto; background: #f0f0f0; border-top: 1px solid #fff; border-bottom: 2px solid #9a9cb4; flex: none; }
.scroll button { width: 15px; display: grid; place-items: center; }
.scroll svg { width: 10px; height: 10px; fill: none; stroke: #444; stroke-width: 1.5; }
.scroll .track { flex: 1; }
.scroll .thumb { width: 81%; height: 100%; background: #cdcdcd; }

.viewport { position: relative; min-width: 0; background:
  linear-gradient(transparent 52%, rgba(253, 253, 254, .6) 60%, #fdfdfe 68%),
  linear-gradient(170deg, #fff 18%, #f5f6f8 32%, #e2e5ee 50%, #dcdfea 58%); }
.model { display: block; width: 100%; height: 100%; }
.hud { position: absolute; top: -15px; right: -3px; display: flex; gap: 7px; }
.hud .split { margin-right: 2px; }
.grip { position: absolute; left: -1px; top: 254px; width: 9px; height: 39px; display: grid; place-content: center; gap: 3px; background: #e3e6eb; border: 1px solid #222; border-left: 0; }
.grip i { border: 3px solid transparent; border-right-color: #333; border-left: 0; }
.corner { position: absolute; left: 13px; bottom: 3px; }
.triad { display: block; width: 58px; height: 58px; margin-bottom: 19px; font: 10px "Open Sans", sans-serif; overflow: visible; }
.view-name { font: 700 12px/13px "Open Sans", sans-serif; }

/* sheet tabs */
.sheets { display: flex; flex: none; height: 3px; overflow: hidden; border-top: 1px solid #111; background: #d7dae0; }
.sheets .nav-keys { width: 68px; background: #a9abaf; }
.sheets button { height: 16px; flex: none; padding: 0 10px; background: #a9abb0; border-right: 1px solid #222; font-size: 12px; line-height: 8px; }
.sheets .active { background: #e3e6eb; font-weight: 700; }
```
